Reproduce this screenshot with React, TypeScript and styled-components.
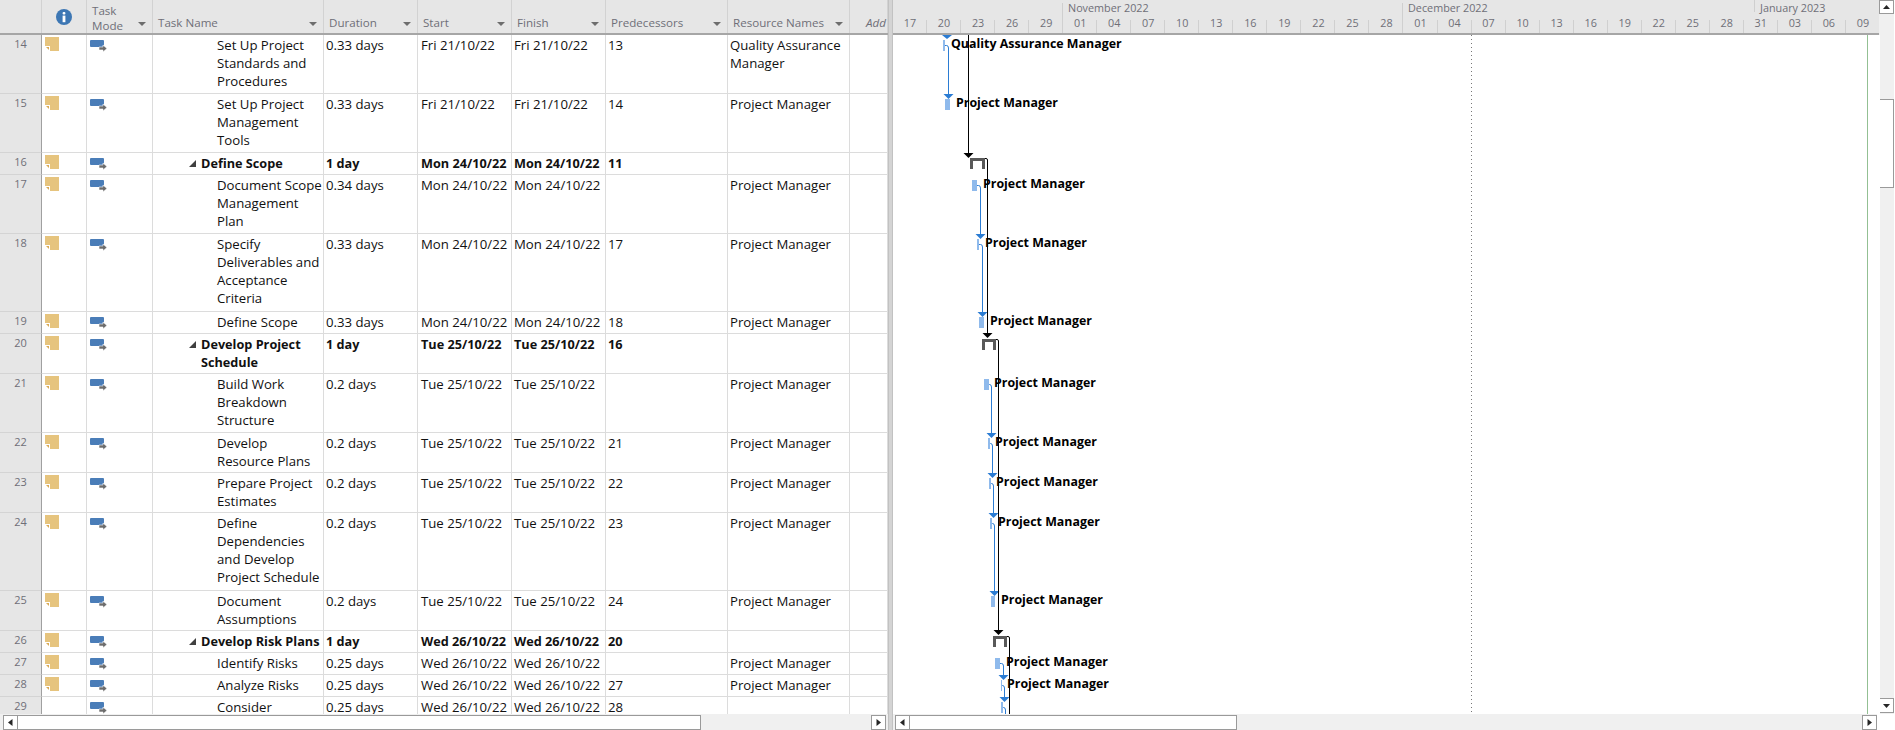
import React from "react";
import styled, { createGlobalStyle } from "styled-components";

const FONT = `"Open Sans", "Noto Sans", "Liberation Sans", sans-serif`;
const ROW_HEIGHTS: Record<number, number> = { 1: 22, 2: 40, 3: 59, 4: 78 };

const GlobalStyle = createGlobalStyle`
    html, body {
        margin: 0;
        padding: 0;
        background: #fff;
        overflow: hidden;
    }
    * {
        box-sizing: border-box;
    }
`;

const Window = styled.div`
    display: flex;
    width: 1895px;
    height: 730px;
    overflow: hidden;
    background: #fff;
    font-family: ${FONT};
`;

const SheetPane = styled.div`
    display: flex;
    flex-direction: column;
    width: 888px;
    height: 730px;
`;

const Splitter = styled.div`
    width: 5px;
    height: 730px;
    background: #d4d4d4;
    border-left: 1px solid #c2c2c2;
    border-right: 1px solid #c2c2c2;
`;

const ChartPane = styled.div`
    display: flex;
    flex-direction: column;
    width: 1002px;
    height: 730px;
`;

const SheetBody = styled.div`
    height: 714px;
    overflow: hidden;
`;

const HeaderRow = styled.div`
    display: grid;
    grid-template-columns: 42px 45px 66px 171px 94px 94px 94px 122px 122px 38px;
    height: 35px;
    background: #e6e6e6;
    border-bottom: 2px solid #a6a6a6;
`;

const HeaderCell = styled.div<{ $pad?: number }>`
    display: flex;
    align-items: flex-end;
    justify-content: space-between;
    height: 33px;
    padding: 0 6px 3px ${(p) => p.$pad ?? 5}px;
    border-right: 1px solid #d2d2d2;
    color: #6f6f78;
    font-size: 11.6px;
    line-height: 15px;
    white-space: nowrap;
    overflow: hidden;
`;

const InfoCell = styled(HeaderCell)`
    align-items: center;
    justify-content: center;
    padding: 0;
`;

const ModeLabel = styled.span`
    position: relative;
    top: 3px;
`;

const AddLabel = styled.span`
    padding-left: 16px;
    font-style: italic;
`;

const SortArrow = styled.i`
    flex: none;
    width: 0;
    height: 0;
    margin-bottom: 4px;
    border-left: 4px solid transparent;
    border-right: 4px solid transparent;
    border-top: 4px solid #6d6d6d;
`;

const Row = styled.div<{ $lines: number }>`
    display: grid;
    grid-template-columns: 42px 45px 66px 171px 94px 94px 94px 122px 122px 38px;
    height: ${(p) => ROW_HEIGHTS[p.$lines]}px;
    border-bottom: 1px solid #dcdcdc;
    font-size: 13.2px;
    line-height: 18px;
    color: #111;
`;

const RowNumber = styled.div`
    margin-bottom: -1px;
    padding-top: 1px;
    background: #e6e6e6;
    border-right: 1px solid #a0a0a0;
    border-bottom: 1px solid #d4d4d4;
    color: #6f6f78;
    font-size: 11px;
    line-height: 16px;
    text-align: center;
`;

const Cell = styled.div<{ $bold?: boolean; $pad?: number }>`
    padding: 1px 0 0 ${(p) => p.$pad ?? 2}px;
    border-right: 1px solid #dcdcdc;
    font-size: ${(p) => (p.$bold ? 12.7 : 13.2)}px;
    font-weight: ${(p) => (p.$bold ? 700 : 400)};
    white-space: nowrap;
    overflow: hidden;
`;

const IconCell = styled.div`
    padding: 2px 0 0 3px;
    border-right: 1px solid #dcdcdc;
`;

const NameCell = styled(Cell)<{ $summary?: boolean }>`
    display: flex;
    padding-left: ${(p) => (p.$summary ? 36 : 64)}px;
`;

const Outline = styled.svg`
    flex: none;
    width: 7px;
    height: 7px;
    margin: 6px 5px 0 0;
`;

const Line = styled.div``;

const Timescale = styled.div`
    flex: none;
    width: 987px;
    height: 35px;
    background: #e6e6e6;
    border-bottom: 2px solid #a6a6a6;
    color: #6f6f78;
    font-size: 10.8px;
`;

const MonthTier = styled.div`
    display: flex;
    height: 15px;
`;

const MonthCell = styled.div<{ $width: number; $short?: boolean }>`
    position: relative;
    flex: none;
    width: ${(p) => p.$width}px;
    padding-left: 6px;
    line-height: 15px;
    white-space: nowrap;
    &::before {
        content: "";
        position: absolute;
        left: 0;
        top: ${(p) => (p.$short ? 0 : 3)}px;
        width: 1px;
        height: ${(p) => (p.$short ? 12 : 17)}px;
        background: #cfcfcf;
    }
`;

const LeadCell = styled.div`
    flex: none;
    width: 169px;
`;

const DayTier = styled.div`
    display: flex;
    height: 18px;
`;

const DayCell = styled.div`
    position: relative;
    flex: 1;
    line-height: 16px;
    text-align: center;
    &:not(:last-child)::after {
        content: "";
        position: absolute;
        right: 0;
        bottom: 0;
        width: 1px;
        height: 13px;
        background: #d0d0d0;
    }
`;

const ChartBody = styled.div`
    display: flex;
    height: 714px;
`;

const ChartColumn = styled.div`
    display: flex;
    flex-direction: column;
    width: 987px;
`;

const Canvas = styled.div`
    position: relative;
    height: 679px;
    overflow: hidden;
    background: #fff;
`;

const CanvasArt = styled.svg`
    position: absolute;
    inset: 0;
`;

const BarLabel = styled.span.attrs<{ $x: number; $y: number }>((p) => ({
    style: { left: p.$x - 893, top: p.$y - 35 - 8 },
}))`
    position: absolute;
    color: #000;
    font-size: 12.4px;
    font-weight: 700;
    line-height: 18px;
    white-space: nowrap;
`;

const VScroll = styled.div`
    display: flex;
    flex-direction: column;
    width: 15px;
    height: 714px;
    margin-left: -1px;
    background: #f0f0f0;
`;

const VThumb = styled.div`
    width: 15px;
    height: 89px;
    margin-top: 85px;
    margin-bottom: auto;
    background: #fff;
    border: 1px solid #9a9a9a;
`;

const HScroll = styled.div`
    display: flex;
    height: 16px;
    padding: 1px 0 0 3px;
    background: #f0f0f0;
`;

const ChartHScroll = styled(HScroll)`
    padding-left: 2px;
    padding-right: 18px;
    background: linear-gradient(to left, #fff 18px, #f0f0f0 18px);
`;

const ScrollButton = styled.div<{ $tall?: number; $gap?: number }>`
    display: flex;
    flex: none;
    align-items: center;
    justify-content: center;
    width: 15px;
    height: ${(p) => p.$tall ?? 15}px;
    margin-right: ${(p) => p.$gap ?? 0}px;
    margin-bottom: ${(p) => (p.$tall === 15 ? 1 : 0)}px;
    background: #fff;
    border: 1px solid #9a9a9a;
`;

const HThumb = styled.div<{ $width: number }>`
    flex: none;
    width: ${(p) => p.$width}px;
    height: 15px;
    margin-right: auto;
    margin-left: -1px;
    background: #fff;
    border: 1px solid #9a9a9a;
`;

const Glyph = styled.svg`
    width: 7px;
    height: 7px;
    fill: #262626;
`;

type Task = {
    id: number;
    name: string[];
    duration: string;
    start: string;
    finish: string;
    pred?: string;
    res?: string[];
    summary?: boolean;
    noNote?: boolean;
};

const PM = ["Project Manager"];
const FRI = "Fri 21/10/22";
const MON = "Mon 24/10/22";
const TUE = "Tue 25/10/22";
const WED = "Wed 26/10/22";

const tasks: Task[] = [
    { id: 14, name: ["Set Up Project", "Standards and", "Procedures"], duration: "0.33 days", start: FRI, finish: FRI, pred: "13", res: ["Quality Assurance", "Manager"] },
    { id: 15, name: ["Set Up Project", "Management", "Tools"], duration: "0.33 days", start: FRI, finish: FRI, pred: "14", res: PM },
    { id: 16, name: ["Define Scope"], duration: "1 day", start: MON, finish: MON, pred: "11", summary: true },
    { id: 17, name: ["Document Scope", "Management", "Plan"], duration: "0.34 days", start: MON, finish: MON, res: PM },
    { id: 18, name: ["Specify", "Deliverables and", "Acceptance", "Criteria"], duration: "0.33 days", start: MON, finish: MON, pred: "17", res: PM },
    { id: 19, name: ["Define Scope"], duration: "0.33 days", start: MON, finish: MON, pred: "18", res: PM },
    { id: 20, name: ["Develop Project", "Schedule"], duration: "1 day", start: TUE, finish: TUE, pred: "16", summary: true },
    { id: 21, name: ["Build Work", "Breakdown", "Structure"], duration: "0.2 days", start: TUE, finish: TUE, res: PM },
    { id: 22, name: ["Develop", "Resource Plans"], duration: "0.2 days", start: TUE, finish: TUE, pred: "21", res: PM },
    { id: 23, name: ["Prepare Project", "Estimates"], duration: "0.2 days", start: TUE, finish: TUE, pred: "22", res: PM },
    { id: 24, name: ["Define", "Dependencies", "and Develop", "Project Schedule"], duration: "0.2 days", start: TUE, finish: TUE, pred: "23", res: PM },
    { id: 25, name: ["Document", "Assumptions"], duration: "0.2 days", start: TUE, finish: TUE, pred: "24", res: PM },
    { id: 26, name: ["Develop Risk Plans"], duration: "1 day", start: WED, finish: WED, pred: "20", summary: true },
    { id: 27, name: ["Identify Risks"], duration: "0.25 days", start: WED, finish: WED, res: PM },
    { id: 28, name: ["Analyze Risks"], duration: "0.25 days", start: WED, finish: WED, pred: "27", res: PM },
    { id: 29, name: ["Consider"], duration: "0.25 days", start: WED, finish: WED, pred: "28", noNote: true },
];

const days = ["17", "20", "23", "26", "29", "01", "04", "07", "10", "13", "16", "19", "22", "25", "28", "01", "04", "07", "10", "13", "16", "19", "22", "25", "28", "31", "03", "06", "09"];

// bars on the chart, page coordinates: bar left/right/top, then the link down to the next bar
type Bar = { x1: number; x2: number; top: number; linkX?: number; linkTo?: number };

const bars: Bar[] = [
    { x1: 943, x2: 945, top: 40, linkX: 948.5, linkTo: 94 },
    { x1: 945, x2: 950, top: 99 },
    { x1: 972, x2: 977, top: 180, linkX: 980.5, linkTo: 234 },
    { x1: 977, x2: 979, top: 239, linkX: 982.5, linkTo: 312 },
    { x1: 979, x2: 984, top: 317 },
    { x1: 984, x2: 989, top: 379, linkX: 991.5, linkTo: 433 },
    { x1: 988, x2: 990, top: 438, linkX: 992.5, linkTo: 473 },
    { x1: 989, x2: 991, top: 478, linkX: 993.5, linkTo: 513 },
    { x1: 990, x2: 992, top: 518, linkX: 994.5, linkTo: 591 },
    { x1: 991, x2: 995, top: 596 },
    { x1: 995, x2: 1000, top: 658, linkX: 1003.5, linkTo: 675 },
    { x1: 1001, x2: 1002, top: 680, linkX: 1004.5, linkTo: 697 },
    { x1: 1001, x2: 1003, top: 702, linkX: 1005.5, linkTo: 720 },
];

// left, top, width of the summary brackets and where the black link from each one ends
const summaries = [
    { x: 970, top: 158, width: 15, linkX: 987.5, linkTo: 334 },
    { x: 982, top: 339, width: 14, linkX: 998.5, linkTo: 631 },
    { x: 993, top: 636, width: 14, linkX: 1009.5, linkTo: 720 },
];

const labels = [
    { x: 951, y: 43, text: "Quality Assurance Manager" },
    { x: 956, y: 102, text: "Project Manager" },
    { x: 983, y: 183, text: "Project Manager" },
    { x: 985, y: 242, text: "Project Manager" },
    { x: 990, y: 320, text: "Project Manager" },
    { x: 994, y: 382, text: "Project Manager" },
    { x: 995, y: 441, text: "Project Manager" },
    { x: 996, y: 481, text: "Project Manager" },
    { x: 998, y: 521, text: "Project Manager" },
    { x: 1001, y: 599, text: "Project Manager" },
    { x: 1006, y: 661, text: "Project Manager" },
    { x: 1007, y: 683, text: "Project Manager" },
];

const Arrow = ({ x, tip, color }: { x: number; tip: number; color: string }) => (
    <polygon points={`${x - 5},${tip - 5} ${x + 5},${tip - 5} ${x},${tip}`} fill={color} />
);

const InfoIcon = () => (
    <svg width="16" height="16" viewBox="0 0 16 16">
        <circle cx="8" cy="8" r="8" fill="#3d77b4" />
        <rect x="6.6" y="3" width="2.8" height="2.6" rx="1" fill="#fff" />
        <rect x="6.6" y="6.6" width="2.8" height="6.6" fill="#fff" />
    </svg>
);

const NoteIcon = () => (
    <svg width="14" height="14" viewBox="0 0 14 14" style={{ display: "block" }}>
        <rect width="14" height="14" fill="#e6c47e" />
        <rect x="0" y="9" width="5" height="5" fill="#fff" />
        <polygon points="0,9 5,9 5,14" fill="#fff" />
        <polygon points="1,10 4,10 4,13" fill="#d9aa55" />
    </svg>
);

const ModeIcon = () => (
    <svg width="18" height="12" viewBox="0 0 18 12" style={{ display: "block", marginTop: 3 }}>
        <rect x="0" y="0" width="14" height="7" rx="1" fill="#4a7db8" />
        <path d="M9 7H13V5L17 8.5L13 12V10H9Z" fill="#6d6d6d" stroke="#fff" strokeWidth="0.6" />
    </svg>
);

const App = () => (
    <Window>
        <GlobalStyle />
        <SheetPane>
            <SheetBody>
                <HeaderRow>
                    <HeaderCell />
                    <InfoCell>
                        <InfoIcon />
                    </InfoCell>
                    <HeaderCell>
                        <ModeLabel>
                            Task
                            <br />
                            Mode
                        </ModeLabel>
                        <SortArrow />
                    </HeaderCell>
                    <HeaderCell>
                        Task Name
                        <SortArrow />
                    </HeaderCell>
                    <HeaderCell>
                        Duration
                        <SortArrow />
                    </HeaderCell>
                    <HeaderCell>
                        Start
                        <SortArrow />
                    </HeaderCell>
                    <HeaderCell>
                        Finish
                        <SortArrow />
                    </HeaderCell>
                    <HeaderCell>
                        Predecessors
                        <SortArrow />
                    </HeaderCell>
                    <HeaderCell>
                        Resource Names
                        <SortArrow />
                    </HeaderCell>
                    <HeaderCell $pad={0}>
                        <AddLabel>Add New Column</AddLabel>
                    </HeaderCell>
                </HeaderRow>
                {tasks.map((t) => (
                    <Row key={t.id} $lines={Math.max(t.name.length, t.res?.length ?? 1)}>
                        <RowNumber>{t.id}</RowNumber>
                        <IconCell>{!t.noNote && <NoteIcon />}</IconCell>
                        <IconCell>
                            <ModeIcon />
                        </IconCell>
                        <NameCell $bold={t.summary} $summary={t.summary}>
                            {t.summary && (
                                <Outline viewBox="0 0 7 7">
                                    <polygon points="7,0 7,7 0,7" fill="#404040" />
                                </Outline>
                            )}
                            <div>
                                {t.name.map((l) => (
                                    <Line key={l}>{l}</Line>
                                ))}
                            </div>
                        </NameCell>
                        <Cell $bold={t.summary}>{t.duration}</Cell>
                        <Cell $bold={t.summary} $pad={3}>
                            {t.start}
                        </Cell>
                        <Cell $bold={t.summary}>{t.finish}</Cell>
                        <Cell $bold={t.summary}>{t.pred}</Cell>
                        <Cell>
                            {t.res?.map((l) => (
                                <Line key={l}>{l}</Line>
                            ))}
                        </Cell>
                        <Cell />
                    </Row>
                ))}
            </SheetBody>
            <HScroll>
                <ScrollButton>
                    <Glyph viewBox="0 0 7 7">
                        <polygon points="5.5,0 5.5,7 1,3.5" />
                    </Glyph>
                </ScrollButton>
                <HThumb $width={684} />
                <ScrollButton $gap={2}>
                    <Glyph viewBox="0 0 7 7">
                        <polygon points="1.5,0 1.5,7 6,3.5" />
                    </Glyph>
                </ScrollButton>
            </HScroll>
        </SheetPane>
        <Splitter />
        <ChartPane>
            <ChartBody>
                <ChartColumn>
                    <Timescale>
                        <MonthTier>
                            <LeadCell />
                            <MonthCell $width={340}>November 2022</MonthCell>
                            <MonthCell $width={352}>December 2022</MonthCell>
                            <MonthCell $width={126} $short>
                                January 2023
                            </MonthCell>
                        </MonthTier>
                        <DayTier>
                            {days.map((d, i) => (
                                <DayCell key={i}>{d}</DayCell>
                            ))}
                        </DayTier>
                    </Timescale>
                    <Canvas>
                        <CanvasArt width="987" height="679" viewBox="893 35 987 679">
                            <line x1="1471.5" y1="35" x2="1471.5" y2="714" stroke="#777" strokeDasharray="1 3" />
                            <line x1="1867.5" y1="35" x2="1867.5" y2="714" stroke="#93c093" />
                            <path d="M968.5 35V154" stroke="#000" fill="none" />
                            <Arrow x={968.5} tip={158} color="#000" />
                            {bars.map((b, i) => (
                                <g key={i}>
                                    <rect x={b.x1} y={b.top} width={b.x2 - b.x1} height={11} fill="#8fbaec" />
                                    {b.linkX !== undefined && b.linkTo !== undefined && (
                                        <>
                                            <path
                                                d={`M${b.x2} ${b.top + 5.5}H${b.linkX - 2}Q${b.linkX} ${b.top + 5.5} ${b.linkX} ${b.top + 8}V${b.linkTo}`}
                                                stroke="#2b7cd3"
                                                fill="none"
                                            />
                                            <Arrow x={b.linkX} tip={b.linkTo + 5} color="#2b7cd3" />
                                        </>
                                    )}
                                </g>
                            ))}
                            <polygon points="942,35 952,35 947,39" fill="#2b7cd3" />
                            {summaries.map((s) => (
                                <g key={s.x}>
                                    <path
                                        d={`M${s.x} ${s.top}h${s.width}v11h-3v-8h-${s.width - 6}v8h-3Z`}
                                        fill="#595959"
                                    />
                                    <path
                                        d={`M${s.x + s.width} ${s.top + 0.5}H${s.linkX - 1.5}Q${s.linkX} ${s.top + 0.5} ${s.linkX} ${s.top + 2}V${s.linkTo}`}
                                        stroke="#000"
                                        fill="none"
                                    />
                                    <Arrow x={s.linkX} tip={s.linkTo + 4} color="#000" />
                                </g>
                            ))}
                        </CanvasArt>
                        {labels.map((l) => (
                            <BarLabel key={l.y} $x={l.x} $y={l.y}>
                                {l.text}
                            </BarLabel>
                        ))}
                    </Canvas>
                </ChartColumn>
                <VScroll>
                    <ScrollButton $tall={14}>
                        <Glyph viewBox="0 0 7 7">
                            <polygon points="0,5 7,5 3.5,1" />
                        </Glyph>
                    </ScrollButton>
                    <VThumb />
                    <ScrollButton $tall={15}>
                        <Glyph viewBox="0 0 7 7">
                            <polygon points="0,2 7,2 3.5,6" />
                        </Glyph>
                    </ScrollButton>
                </VScroll>
            </ChartBody>
            <ChartHScroll>
                <ScrollButton>
                    <Glyph viewBox="0 0 7 7">
                        <polygon points="5.5,0 5.5,7 1,3.5" />
                    </Glyph>
                </ScrollButton>
                <HThumb $width={328} />
                <ScrollButton>
                    <Glyph viewBox="0 0 7 7">
                        <polygon points="1.5,0 1.5,7 6,3.5" />
                    </Glyph>
                </ScrollButton>
            </ChartHScroll>
        </ChartPane>
    </Window>
);

export default App;
